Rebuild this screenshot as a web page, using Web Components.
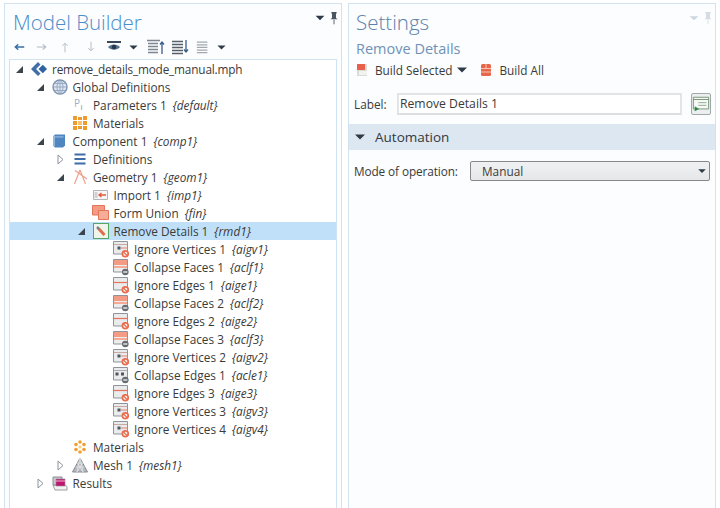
<!DOCTYPE html>
<html>
<head>
<meta charset="utf-8">
<style>
  html, body { margin: 0; height: 100%; overflow: hidden; background: #fff; }
  body { font: 11.8px "Open Sans", "Liberation Sans", sans-serif; color: #3a3a3a; }
</style>
</head>
<body>
<model-app></model-app>
<script>
(function() {
  // small svg icons, 16x16 unless the caller sets a size
  const NO = '<circle cx="12.300" cy="12.800" r="2.900" fill="#fff" stroke="#ea6c4e" stroke-width="1.700"/><path d="M10.300 10.800l4 4" stroke="#ea6c4e" stroke-width="1.300"/>';
  const MINUS = '<circle cx="12.300" cy="13" r="3.300" fill="#666b71"/><path d="M10.300 13h4" stroke="#fff" stroke-width="1.200"/>';
  const BOX = '<path d="M.5 .5h14v12.500H.5z" fill="#e9ebed" stroke="#8f949a"/>';
  const ICONS = {
    root: '<path d="M0 8l7-7 2.500 2.500L5 8l4.500 4.500L7 15z" fill="#3f6fa8"/><path d="M7.500 8L11.800 3.700 16 8l-4.200 4.300z" fill="#2f62a2"/>',
    globe: '<circle cx="8" cy="8" r="7" fill="#dfe6ef" stroke="#7d93b2" stroke-width="1.400"/><path d="M1 8h14M2.200 4.500h11.600M2.200 11.500h11.600M8 1v14M8 1C4 4 4 12 8 15M8 1c4 3 4 11 0 14" fill="none" stroke="#8aa0bd" stroke-width=".8"/>',
    param: '<text x="2" y="10" font-family="Open Sans" font-size="10" fill="#9cb0cb">P</text><text x="8.500" y="12.500" font-family="Open Sans" font-size="8" fill="#6d86a8">i</text>',
    mat: '<g fill="#ee9a2c"><rect x="1" y="1" width="4" height="4"/><rect x="6" y="2" width="4" height="3"/><rect x="11" y="1" width="4" height="4"/><rect x="1" y="6" width="4" height="4"/><rect x="6" y="6" width="4" height="4" fill="#f6c26d"/><rect x="11" y="6" width="4" height="4"/><rect x="1" y="11" width="4" height="4"/><rect x="6" y="11" width="4" height="3"/><rect x="11" y="11" width="4" height="4"/></g>',
    mat2: '<g fill="#f0a030"><circle cx="8" cy="3" r="1.800"/><circle cx="4" cy="5.500" r="1.800"/><circle cx="12" cy="5.500" r="1.800"/><circle cx="4" cy="10.500" r="1.800"/><circle cx="12" cy="10.500" r="1.800"/><circle cx="8" cy="13" r="1.800"/><circle cx="8" cy="8" r="1.600" fill="#f8cf80"/></g>',
    comp: '<path d="M1 3.500L3 1.500h10v11l-2 2H3l-2-2z" fill="#4f86c0"/><path d="M1 3v10h2V3z" fill="#8fb6dd"/><path d="M1 3.200h10.500v1.300H3z" fill="#8fb6dd"/>',
    defs: '<path d="M2.500 3.500h11M2.500 8h11M2.500 12.500h11" stroke="#3d6ca8" stroke-width="2"/>',
    geom: '<path d="M8 1L2.500 15M8 1l5.500 14M3 1.500L15 10" fill="none" stroke="#efa08c" stroke-width="1.200"/>',
    imp: '<path d="M.5 3.500h14v9H.5z" fill="#f5f5f5" stroke="#b2b6ba"/><path d="M1.500 6h3M1.500 8h3M1.500 10h3" stroke="#a9adb2"/><path d="M13 8H6.500M8.500 6L6 8l2.500 2" fill="none" stroke="#e2583c" stroke-width="1.300"/>',
    union: '<path d="M-.5 .5h12v9.500h-12z" fill="#f39b84" stroke="#e4745a"/><path d="M5.500 5.500h10v9h-10z" fill="#f6ad98" stroke="#e4745a"/>',
    remove: '<rect x=".5" y=".5" width="15" height="15" fill="#f1f4ea" stroke="#56a564"/><path d="M5.500 5.500l6 6.500" stroke="#dc6f4a" stroke-width="3"/><path d="M4 4l2 2" stroke="#7d8289" stroke-width="2.500"/>',
    vert: BOX + '<path d="M1 3.500h13" stroke="#c9a8a2"/><rect x="4.500" y="5.500" width="3" height="3" fill="#50565e"/><path d="M8 7h6" stroke="#e8806c"/>' + NO,
    edge: BOX + '<path d="M1 5.500h13" stroke="#e8715c" stroke-width="1.200"/>' + NO,
    face: '<path d="M.5 .5h14v12.500H.5z" fill="#ededed" stroke="#8f949a"/><path d="M1 1h13v5H1z" fill="#f39b84"/><path d="M1 7h13v2H1z" fill="#f5aa96"/>' + MINUS,
    cedge: BOX + '<path d="M1 3.500h13" stroke="#a8adb2"/><rect x="2.500" y="5.500" width="3" height="3" fill="#50565e"/><rect x="8" y="5.500" width="3" height="3" fill="#50565e"/>' + MINUS,
    mesh: '<path d="M8 1l7.500 14H.5z" fill="#b4b9bf" stroke="#868c93"/><path d="M5.500 6h5M3.500 10h9M8 1L5 15M8 1l3 14M5.500 6L11 15M10.500 6L5 15" fill="none" stroke="#e9ebed" stroke-width=".7"/>',
    results: '<path d="M1 10h12l2 1.500V15H3z" fill="#f2f2f2" stroke="#9a9ea3"/><path d="M1 2h9v8H1z" fill="#c9c9cf" stroke="#8c8c92"/><path d="M4 4h9v7H4z" fill="#c0156f" stroke="#8c8c92" stroke-width=".6"/><path d="M4 6h9" stroke="#f2b8d4"/>',
    arrowL: '<path d="M15 8H3M7 4.500L3 8l4 3.500" fill="none" stroke="#3b6ea8" stroke-width="1.800"/>',
    arrowR: '<path d="M1 8h12M9 4.500L13 8l-4 3.500" fill="none" stroke="#b4bcc6" stroke-width="1.500"/>',
    arrowU: '<path d="M8 15V3M4.500 6.500L8 3l3.500 3.500" fill="none" stroke="#b4bcc6" stroke-width="1.300"/>',
    arrowD: '<path d="M8 1v12M4.500 9.500L8 13l3.500-3.500" fill="none" stroke="#b4bcc6" stroke-width="1.300"/>',
    eye: '<path d="M1 2h14v2H1z" fill="#37475c"/><path d="M2 8c3-3.500 9-3.500 12 0-3 3.500-9 3.500-12 0z" fill="#55708f"/><circle cx="8" cy="8" r="2.200" fill="#26384e"/>',
    listUp: '<path d="M0 1.500h13M1 4.500h10M1 7.500h10M1 10.500h10M1 13.500h10" stroke="#7d8690" stroke-width="1.500"/><path d="M15 15V3M13 5.500L15 3l2 2.500" fill="none" stroke="#3b5f8c" stroke-width="1.300"/>',
    listDown: '<path d="M0 2.500h11M0 5.500h11M0 8.500h11M0 11.500h11M0 14.500h11" stroke="#56606a" stroke-width="1.600"/><path d="M14 1v12M12 10.500l2 2.500 2-2.500" fill="none" stroke="#3b5f8c" stroke-width="1.300"/>',
    list: '<path d="M1 2.500h12M1 5.500h12M1 8.500h12M1 11.500h12M1 14.500h12" stroke="#a2a8ae" stroke-width="1.500"/>',
    down: '<path d="M3 5.500h10L8 10.500z" fill="#2e3a46"/>',
    downPale: '<path d="M3 6h10L8 10.500z" fill="#cdd6df"/>',
    pin: '<path d="M5 1h6v1.500l-.7.5v5l1.700 1.500H4L5.700 8V3L5 2.500zM7.500 10h1v5h-1z" fill="#4a5560"/>',
    pinPale: '<path d="M5 1h6v1.500l-.7.5v5l1.700 1.500H4L5.700 8V3L5 2.500zM7.500 10h1v5h-1z" fill="#d5dce3"/>',
    buildSel: '<path d="M3 2h10v12H3z" fill="#d9dcd8"/><path d="M3 2h8v6H3z" fill="#e8604a"/><path d="M5 9h8v4H5z" fill="#f2f2ee"/>',
    buildAll: '<rect x="3" y="2" width="10" height="12" rx="1.500" fill="#e8664a"/><path d="M3 6.500h10M3 10h10M8 2v4.500" stroke="#f7c7b5" stroke-width="1"/>',
    note: '<path d="M1.500 2.500h17v13h-17z" fill="#f7f8f5" stroke="#6f8f6f"/><path d="M1.500 5h17" stroke="#6f8f6f"/><path d="M7 8.500h9M7 11.500h9" stroke="#8ba68b"/><path d="M3 18v-5.500l5 3z" fill="#2e8b4a"/>'
  };

  class UiIcon extends HTMLElement {
    constructor() {
      super();
      this.attachShadow({ mode: 'open' });
    }

    connectedCallback() {
      const size = this.getAttribute('size') || 16;
      const box = this.getAttribute('box') || '0 0 16 16';
      this.shadowRoot.innerHTML = `
        <style>
          :host { display: block; flex: none; width: ${size}px; height: ${size}px; }
          svg { display: block; overflow: visible; }
        </style>
        <svg width="${size}" height="${size}" viewBox="${box}">${ICONS[this.getAttribute('name')] || ''}</svg>
      `;
    }
  }
  customElements.define('ui-icon', UiIcon);

  class UiPanel extends HTMLElement {
    constructor() {
      super();
      this.attachShadow({ mode: 'open' });
      this.shadowRoot.innerHTML = `
        <style>
          :host { display: flex; flex-direction: column; box-sizing: border-box; border: 1px solid #d2e2ef; border-bottom: 0; background: #fbfdfe; min-width: 0; }
          header { display: flex; align-items: center; height: 34px; padding: 1px 0 0 var(--title-x, 8px); box-sizing: border-box; flex: none; }
          h1 { flex: 1; margin: 0; font: 300 20.5px/30px "Open Sans", "Liberation Sans", sans-serif; color: var(--title-color, #4a8ec9); }
          .actions { display: flex; gap: 0; margin-top: -7px; }
        </style>
        <header><h1></h1><div class="actions"><slot name="actions"></slot></div></header>
        <slot></slot>
      `;
    }

    connectedCallback() {
      this.shadowRoot.querySelector('h1').textContent = this.getAttribute('heading');
    }
  }
  customElements.define('ui-panel', UiPanel);

  class TreeRow extends HTMLElement {
    constructor() {
      super();
      this.attachShadow({ mode: 'open' });
    }

    connectedCallback() {
      const level = Number(this.getAttribute('level') || 0);
      const state = this.getAttribute('state');
      const tag = this.getAttribute('tag');
      let arrow = '';
      if (state === 'open') arrow = '<svg width="9" height="9" viewBox="0 0 9 9"><path d="M8 1v7H1z" fill="#3c444c"/></svg>';
      if (state === 'closed') arrow = '<svg width="9" height="11" viewBox="0 0 9 11"><path d="M2 1l5 4.500L2 10z" fill="#fff" stroke="#8c949c"/></svg>';
      this.shadowRoot.innerHTML = `
        <style>
          :host { display: flex; align-items: center; height: 18px; padding-left: ${4 + level * 20.5}px; white-space: nowrap; }
          :host([selected]) { background: #bfe0f8; }
          .arrow { width: 17px; height: 18px; flex: none; display: flex; align-items: center; padding-left: 1px; box-sizing: border-box; }
          ui-icon { margin-right: 5px; }
          i { font-style: italic; margin-left: 6px; }
        </style>
        <span class="arrow">${arrow}</span>
        <ui-icon name="${this.getAttribute('icon')}"></ui-icon>
        <span><slot></slot></span>${tag ? `<i>{${tag}}</i>` : ''}
      `;
    }
  }
  customElements.define('tree-row', TreeRow);

  const TREE = [
    [0, 'open', 'root', 'remove_details_mode_manual.mph'],
    [1, 'open', 'globe', 'Global Definitions'],
    [2, '', 'param', 'Parameters 1', 'default'],
    [2, '', 'mat', 'Materials'],
    [1, 'open', 'comp', 'Component 1', 'comp1'],
    [2, 'closed', 'defs', 'Definitions'],
    [2, 'open', 'geom', 'Geometry 1', 'geom1'],
    [3, '', 'imp', 'Import 1', 'imp1'],
    [3, '', 'union', 'Form Union', 'fin'],
    [3, 'open', 'remove', 'Remove Details 1', 'rmd1', true],
    [4, '', 'vert', 'Ignore Vertices 1', 'aigv1'],
    [4, '', 'face', 'Collapse Faces 1', 'aclf1'],
    [4, '', 'edge', 'Ignore Edges 1', 'aige1'],
    [4, '', 'face', 'Collapse Faces 2', 'aclf2'],
    [4, '', 'edge', 'Ignore Edges 2', 'aige2'],
    [4, '', 'face', 'Collapse Faces 3', 'aclf3'],
    [4, '', 'vert', 'Ignore Vertices 2', 'aigv2'],
    [4, '', 'cedge', 'Collapse Edges 1', 'acle1'],
    [4, '', 'edge', 'Ignore Edges 3', 'aige3'],
    [4, '', 'vert', 'Ignore Vertices 3', 'aigv3'],
    [4, '', 'vert', 'Ignore Vertices 4', 'aigv4'],
    [2, '', 'mat2', 'Materials'],
    [2, 'closed', 'mesh', 'Mesh 1', 'mesh1'],
    [1, 'closed', 'results', 'Results']
  ];

  class ModelTree extends HTMLElement {
    constructor() {
      super();
      this.attachShadow({ mode: 'open' });
      const rows = TREE.map(([level, state, icon, text, tag, sel]) =>
        `<tree-row level="${level}" state="${state}" icon="${icon}"${tag ? ` tag="${tag}"` : ''}${sel ? ' selected' : ''}>${text}</tree-row>`
      ).join('');
      this.shadowRoot.innerHTML = `
        <style>
          :host { display: block; flex: 1; margin: 0 4px 0 4px; background: #fff; border: 1px solid #d2e2ef; border-bottom: 0; }
          tree-row:first-of-type { letter-spacing: -.17px; }
        </style>
        ${rows}
      `;
    }
  }
  customElements.define('model-tree', ModelTree);

  class SettingsForm extends HTMLElement {
    constructor() {
      super();
      this.attachShadow({ mode: 'open' });
      this.shadowRoot.innerHTML = `
        <style>
          :host { display: block; }
          h2 { margin: 0; padding-left: 7px; height: 22px; font: 400 14.5px/22px "Open Sans", "Liberation Sans", sans-serif; color: #6f92b8; }
          .build { display: flex; align-items: center; height: 20px; padding-left: 5px; margin-top: 0; }
          .build span { margin-left: 5px; }
          .build .all { margin-left: 8px; }
          .build .all + span { margin-left: 6px; }
          .build .caret { margin-left: 1px; }
          .label-row { display: flex; align-items: center; height: 22px; margin-top: 13px; padding-left: 5px; }
          .label-row label { width: 43px; flex: none; }
          .field { box-sizing: border-box; width: 285px; height: 22px; border: 2px solid #e2e4e6; border-bottom-color: #dcdee0; background: #fff; padding-left: 1px; line-height: 18px; font-size: 12.2px; }
          .note { box-sizing: border-box; width: 20px; height: 22px; margin-left: 9px; border: 1px solid #a3a8ad; border-radius: 2px; background: #eceff0; display: flex; align-items: center; justify-content: center; }
          .section { display: flex; align-items: center; height: 26px; margin-top: 9px; background: #dce7f2; font-size: 13.5px; color: #33393f; padding-left: 3px; }
          .section span { margin-left: 7px; }
          .mode { display: flex; align-items: center; height: 20px; margin-top: 11px; padding-left: 5px; }
          .mode label { width: 116px; flex: none; letter-spacing: -.1px; }
          .select { box-sizing: border-box; display: flex; align-items: center; width: 240px; height: 20px; border: 1px solid #85898e; border-radius: 2px; background: linear-gradient(#f0f1f2, #e6e7e8); padding-left: 11px; line-height: 18px; }
          .select span { flex: 1; }
          .select ui-icon { margin-right: 1px; }
        </style>
        <h2>Remove Details</h2>
        <div class="build">
          <ui-icon name="buildSel"></ui-icon><span>Build Selected</span>
          <ui-icon class="caret" name="down"></ui-icon>
          <ui-icon class="all" name="buildAll"></ui-icon><span>Build All</span>
        </div>
        <div class="label-row">
          <label>Label:</label>
          <div class="field">Remove Details 1</div>
          <div class="note"><ui-icon name="note" size="18" box="0 0 20 20"></ui-icon></div>
        </div>
        <div class="section"><ui-icon name="down"></ui-icon><span>Automation</span></div>
        <div class="mode">
          <label>Mode of operation:</label>
          <div class="select"><span>Manual</span><ui-icon name="down" size="12" box="0 0 16 16"></ui-icon></div>
        </div>
      `;
    }
  }
  customElements.define('settings-form', SettingsForm);

  class ModelApp extends HTMLElement {
    constructor() {
      super();
      this.attachShadow({ mode: 'open' });
      this.shadowRoot.innerHTML = `
        <style>
          :host { display: flex; gap: 6px; height: 505px; padding: 3px 4px 0 4px; }
          .left { width: 338px; flex: none; }
          .right { width: 368px; flex: none; --title-x: 7px; --title-color: #5b82ab; }
          .tools { display: flex; align-items: center; height: 18px; margin: 0 0 3px; padding-left: 8px; flex: none; }
          .tools ui-icon { margin-right: 8px; }
        </style>
        <ui-panel class="left" heading="Model Builder">
          <ui-icon slot="actions" name="down" size="14"></ui-icon>
          <ui-icon slot="actions" name="pin" size="14"></ui-icon>
          <div class="tools">
            <ui-icon name="arrowL" size="12"></ui-icon>
            <ui-icon name="arrowR" size="12" style="margin-left:3px"></ui-icon>
            <ui-icon name="arrowU" size="12" style="margin-left:3px"></ui-icon>
            <ui-icon name="arrowD" size="12" style="margin-left:6px"></ui-icon>
            <ui-icon name="eye" size="16" style="margin-left:1px"></ui-icon>
            <ui-icon name="down" size="13" style="margin-left:-3px"></ui-icon>
            <ui-icon name="listUp" size="16" style="margin-left:-1px"></ui-icon>
            <ui-icon name="listDown" size="16" style="margin-left:1px"></ui-icon>
            <ui-icon name="list" size="14"></ui-icon>
            <ui-icon name="down" size="13" style="margin-left:-3px"></ui-icon>
          </div>
          <model-tree></model-tree>
        </ui-panel>
        <ui-panel class="right" heading="Settings">
          <ui-icon slot="actions" name="downPale" size="14"></ui-icon>
          <ui-icon slot="actions" name="pinPale" size="14"></ui-icon>
          <settings-form></settings-form>
        </ui-panel>
      `;
    }
  }
  customElements.define('model-app', ModelApp);
})();
</script>
</body>
</html>
